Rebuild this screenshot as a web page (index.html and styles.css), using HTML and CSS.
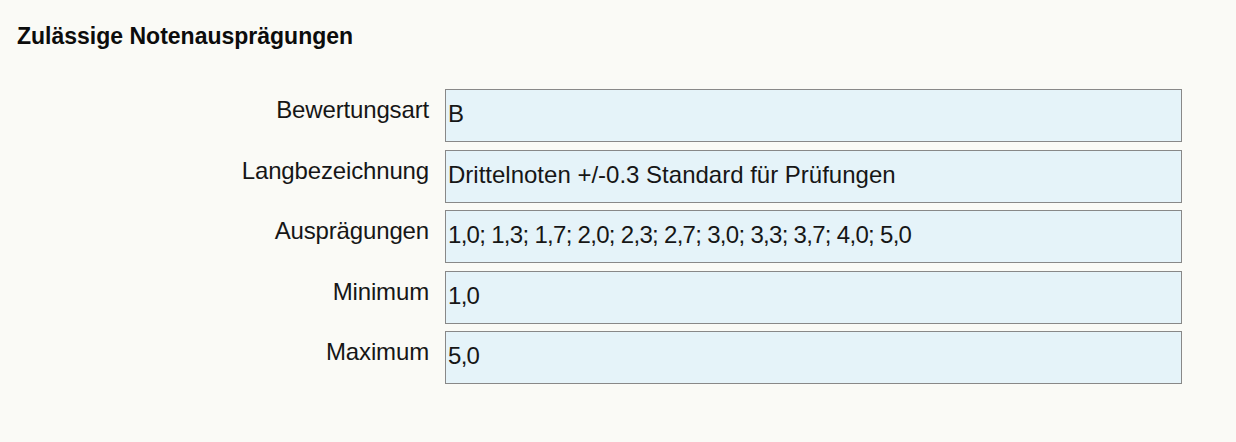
FILE: index.html
```html
<!DOCTYPE html>
<html lang="de">
<head>
<meta charset="utf-8">
<title>Zulässige Notenausprägungen</title>
<link rel="stylesheet" href="styles.css">
</head>
<body>
<section class="panel">
  <h2 class="title">Zulässige Notenausprägungen</h2>
  <div class="form">
    <div class="label">Bewertungsart</div>
    <div class="field">B</div>
    <div class="label">Langbezeichnung</div>
    <div class="field">Drittelnoten +/-0.3 Standard für Prüfungen</div>
    <div class="label">Ausprägungen</div>
    <div class="field field-numbers">1,0; 1,3; 1,7; 2,0; 2,3; 2,7; 3,0; 3,3; 3,7; 4,0; 5,0</div>
    <div class="label">Minimum</div>
    <div class="field field-numbers">1,0</div>
    <div class="label">Maximum</div>
    <div class="field field-numbers">5,0</div>
  </div>
</section>
</body>
</html>
```

FILE: styles.css
```css
html, body {
  margin: 0;
  padding: 0;
  background: #fafaf6;
}
body {
  font-family: "Liberation Sans", Arial, sans-serif;
  color: #111;
  width: 1236px;
  height: 442px;
  overflow: hidden;
}
.panel {
  padding: 23px 0 0 17px;
}
.title {
  margin: 0;
  font-size: 23px;
  line-height: 26px;
  font-weight: 700;
  color: #0c0c0c;
}
.form {
  display: grid;
  grid-template-columns: 412px 737px;
  column-gap: 16px;
  row-gap: 7.5px;
  margin-top: 40px;
}
.label {
  text-align: right;
  font-size: 24px;
  line-height: 28px;
  padding-top: 7px;
  color: #161616;
  letter-spacing: -0.15px;
}
.field {
  box-sizing: border-box;
  height: 53px;
  border: 1px solid #888;
  background: #e5f3f9;
  font-size: 24px;
  line-height: 28px;
  padding: 10px 2px 0;
  color: #161616;
  white-space: nowrap;
}
.field-numbers {
  letter-spacing: -0.7px;
}
```
